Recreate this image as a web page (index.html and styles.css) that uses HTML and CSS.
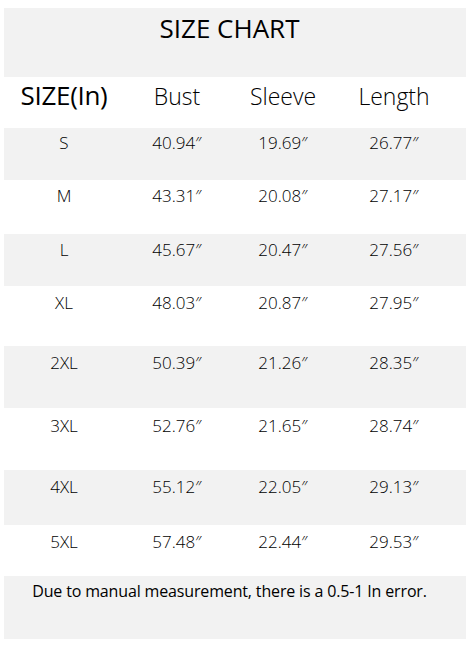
FILE: index.html
```html
<!DOCTYPE html>
<html lang="en">
<head>
<meta charset="utf-8">
<title>Size Chart</title>
<link rel="stylesheet" href="styles.css">
</head>
<body>
<div class="chart">
  <div class="title">SIZE CHART</div>
  <div class="row head">
    <div class="cell size-h">SIZE(In)</div>
    <div class="cell">Bust</div>
    <div class="cell">Sleeve</div>
    <div class="cell">Length</div>
  </div>
  <div class="row data r1 alt">
    <div class="cell">S</div><div class="cell">40.94″</div><div class="cell">19.69″</div><div class="cell">26.77″</div>
  </div>
  <div class="row data r2">
    <div class="cell">M</div><div class="cell">43.31″</div><div class="cell">20.08″</div><div class="cell">27.17″</div>
  </div>
  <div class="row data r3 alt">
    <div class="cell">L</div><div class="cell">45.67″</div><div class="cell">20.47″</div><div class="cell">27.56″</div>
  </div>
  <div class="row data r4">
    <div class="cell">XL</div><div class="cell">48.03″</div><div class="cell">20.87″</div><div class="cell">27.95″</div>
  </div>
  <div class="row data r5 alt">
    <div class="cell">2XL</div><div class="cell">50.39″</div><div class="cell">21.26″</div><div class="cell">28.35″</div>
  </div>
  <div class="row data r6">
    <div class="cell">3XL</div><div class="cell">52.76″</div><div class="cell">21.65″</div><div class="cell">28.74″</div>
  </div>
  <div class="row data r7 alt">
    <div class="cell">4XL</div><div class="cell">55.12″</div><div class="cell">22.05″</div><div class="cell">29.13″</div>
  </div>
  <div class="row data r8">
    <div class="cell">5XL</div><div class="cell">57.48″</div><div class="cell">22.44″</div><div class="cell">29.53″</div>
  </div>
  <div class="note">Due to manual measurement, there is a 0.5-1 In error.</div>
</div>
</body>
</html>
```
FILE: styles.css
```css
html, body {
  background: #ffffff;
}
body {
  margin: 8px 0 0 4px;
  font-family: "Open Sans", "Noto Sans", sans-serif;
  color: #000000;
}
.chart {
  width: 462px;
  display: flex;
  flex-direction: column;
}
.title {
  background: #f2f2f2;
  height: 69px;
  box-sizing: border-box;
  padding: 2px 11px 0 0;
  text-align: center;
  font-size: 26px;
  line-height: 36px;
}
.row {
  display: grid;
  grid-template-columns: 120px 106px 106px 116px 1fr;
  box-sizing: border-box;
}
.cell {
  text-align: center;
}
.head {
  height: 51px;
  align-items: baseline;
  font-size: 23px;
  line-height: 36px;
  font-weight: 300;
}
.head .size-h {
  font-size: 26px;
  font-weight: 400;
  letter-spacing: -0.3px;
}
.data {
  align-items: start;
  font-size: 17px;
  line-height: 24px;
  font-weight: 300;
}
.alt {
  background: #f2f2f2;
}
.r1 { height: 52px; padding-top: 3px; }
.r2 { height: 54px; padding-top: 4px; }
.r3 { height: 52px; padding-top: 4px; }
.r4 { height: 60px; padding-top: 5px; }
.r5 { height: 62px; padding-top: 5px; }
.r6 { height: 62px; padding-top: 6px; }
.r7 { height: 55px; padding-top: 5px; }
.r8 { height: 51px; padding-top: 5px; }
.note {
  background: #f2f2f2;
  height: 63px;
  box-sizing: border-box;
  padding: 4px 11px 0 0;
  text-align: center;
  font-size: 16px;
  line-height: 22px;
  letter-spacing: -0.15px;
}
```
